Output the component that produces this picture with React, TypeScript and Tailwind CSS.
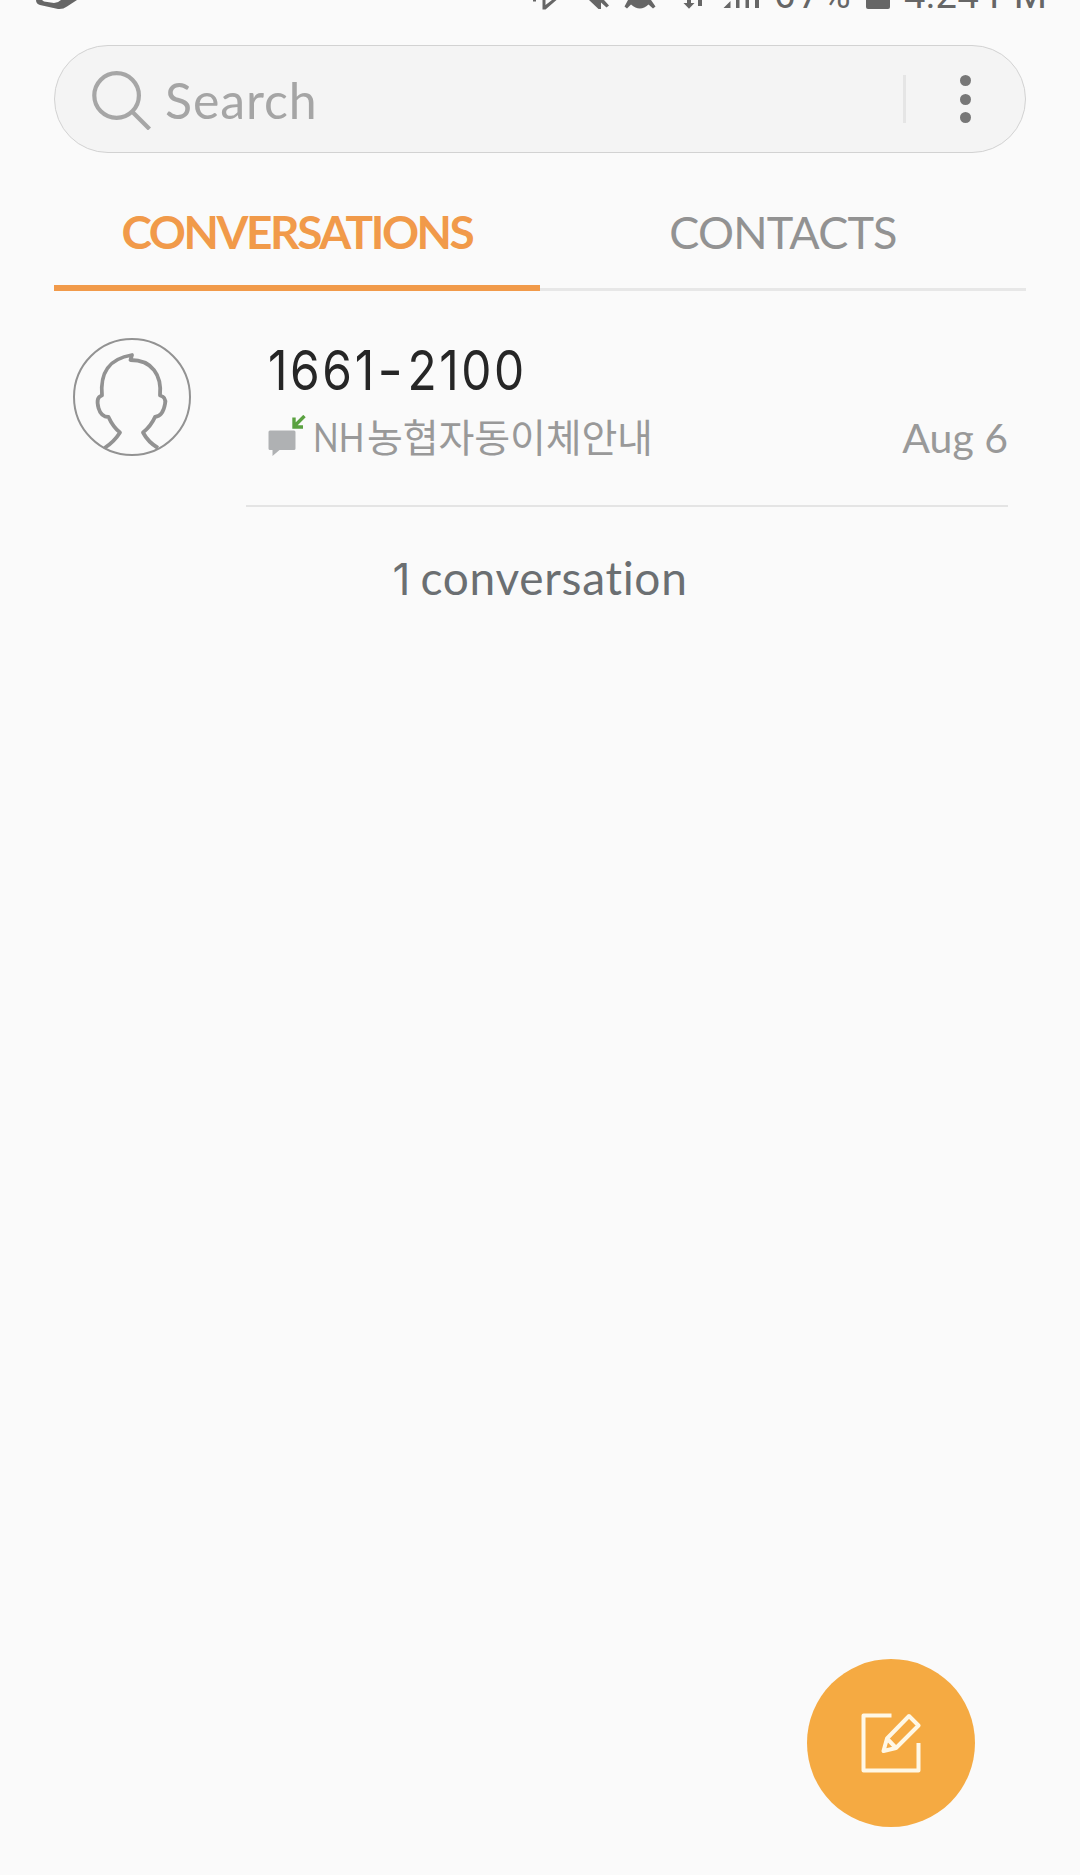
import type { ReactNode } from "react";
import { clsx } from "clsx";

const CONVERSATIONS = [
  { number: ["1661", "-", "2100"], preview: ["NH", "농협자동이체안내"], date: "Aug 6" },
];

function StatusBar() {
  return (
    <div className="relative h-[45px] shrink-0 overflow-hidden text-[#666]">
      <svg className="block h-[12px] w-full" viewBox="0 0 1080 12" fill="currentColor">
        <path d="M36 0 Q36 4 40 5 L58 9 Q63 9.500 67 6.500 L77 0 H61 Q58 3 54 3 L44 1.500 L42 0 Z" />
        <path d="M533 0 H536 V1.500 H533 Z M542.500 0 H545.500 V5 L552 0 H556.500 L545.500 9.500 H542.500 Z" />
        <path d="M589 0 H604 L609 5.500 L606.500 7.500 L601 2.500 V9 H598.500 Z" />
        <path d="M628 0 H651 L655.500 6.500 L653 8.500 L648.500 4.500 Q640 12.500 631 4.500 L627 8.500 L624.500 6.500 Z" />
        <path d="M687 0 H691 V3 H694.500 L689 8.700 L683.500 3 H687 Z M698 0 H702 V6 H698 Z" />
        <path d="M730.500 1 V8 H723.500 Z M736 0 H739.500 V8 H736 Z M745.500 0 H749 V8 H745.500 Z M755 0 H759 V8 H755 Z" />
        <path d="M866 0 H890 V7 Q890 9 888 9 H868 Q866 9 866 7 Z" />
      </svg>
      <span className="absolute left-[774px] top-[-27px] whitespace-pre font-[Roboto] text-[38px] leading-[44px] tracking-[3px]">67%</span>
      <span className="absolute left-[904px] top-[-27px] whitespace-pre font-[Roboto] text-[38px] leading-[44px] tracking-[0.500px]">4:24 PM</span>
    </div>
  );
}

function SearchBar() {
  return (
    <div className="mx-[54px] flex h-[108px] shrink-0 items-center rounded-full border border-[#d2d2d2] bg-[#f4f4f4]">
      <svg className="ml-[36px] size-[62px] shrink-0" viewBox="0 0 62 62" fill="none" stroke="#a6a6a6" strokeWidth="4.200">
        <circle cx="25.600" cy="27.500" r="22.300" />
        <path d="M41 43.500 L58.500 61" />
      </svg>
      <span className="ml-[12px] mt-[2px] flex-1 text-[50px] leading-[106px] tracking-[0.900px] text-[#a5a5a5]">Search</span>
      <div className="h-[48px] w-[3px] bg-[#e5e5e5]" />
      <div className="ml-[54px] mr-[54px] flex flex-col gap-[7.300px]">
        <i className="size-[11px] rounded-full bg-[#777]" />
        <i className="size-[11px] rounded-full bg-[#777]" />
        <i className="size-[11px] rounded-full bg-[#777]" />
      </div>
    </div>
  );
}

function Tab({ active, children }: { active?: boolean; children: ReactNode }) {
  return (
    <div
      className={clsx(
        "flex h-[138px] w-[486px] justify-center whitespace-nowrap pt-[49px] leading-[60px]",
        active
          ? "border-b-[6px] border-[#f19a4a] text-[46px] font-bold tracking-[-2.450px] text-[#f19a4a]"
          : "border-b-[3px] border-[#e7e7e7] text-[45px] tracking-[-0.800px] text-[#929292]"
      )}
    >
      {children}
    </div>
  );
}

function Avatar() {
  return (
    <svg className="size-[120px] shrink-0" viewBox="0 0 120 120" fill="none" stroke="#929292">
      <circle cx="60" cy="60" r="58" strokeWidth="2" />
      <path
        strokeWidth="3.800"
        strokeLinejoin="round"
        d="M32.500 111 Q42 105 48 95.500 Q41 90 36.500 80 Q29 80 26.500 71 Q23.500 60 30 58.500 C28 36 36 22 60 18 L58.500 23 C80 23 90 38 88 58.500 Q94.500 60 93 67 Q91 79 83 80 Q79 89 71 95.500 Q76 105 86 111"
      />
    </svg>
  );
}

function IncomingMessageIcon() {
  return (
    <svg className="-mt-[3px] h-[42px] w-[38px] shrink-0" viewBox="0 0 38 42">
      <path fill="#afb1b3" d="M2 15.500 H26 Q27.500 15.500 27.500 17 V33.500 Q27.500 35 26 35 H11.500 L4.500 41 V35 H2 Q.5 35 .5 33.500 V17 Q.5 15.500 2 15.500 Z" />
      <path fill="none" stroke="#5aa140" strokeWidth="3.400" d="M36.500 1 L26.500 11 M26 2.500 V12 H35" />
    </svg>
  );
}

function ConversationRow({ number, preview, date }: (typeof CONVERSATIONS)[number]) {
  return (
    <div className="flex h-[216px] shrink-0 pl-[72px] pr-[72px]">
      <div className="pt-[46px]">
        <Avatar />
      </div>
      <div className="ml-[54px] flex-1 border-b-[2px] border-[#e4e4e4] pl-[22px]">
        <div className="mt-[44px] flex h-[70px] origin-left scale-x-[0.870] whitespace-nowrap font-[Inter] text-[55px] leading-[70px] tracking-[3px] text-[#262626]">
          {number[0]}
          <span className="ml-[3px] mr-[4px] inline-block scale-x-[1.150]">{number[1]}</span>
          {number[2]}
        </div>
        <div className="mt-[2px] flex h-[60px] items-center whitespace-nowrap text-[40px] leading-[60px] text-[#999]">
          <IncomingMessageIcon />
          <span className="ml-[7px] w-[51px] origin-left scale-x-[0.840]">{preview[0]}</span>
          <span className="-mt-[4px] ml-[3px] font-['Noto_Sans_CJK_KR',sans-serif] text-[39px] tracking-[-0.150px]">{preview[1]}</span>
          <span className="ml-auto mt-[2px] whitespace-pre text-[41px]">{date}</span>
        </div>
      </div>
    </div>
  );
}

function ComposeButton() {
  return (
    <button className="mb-[48px] mr-[105px] mt-auto flex size-[168px] shrink-0 items-center justify-center self-end rounded-full bg-[#f5aa42]">
      <svg className="size-[60px]" viewBox="0 0 60 60" fill="none" stroke="#fff8e6" strokeWidth="4" strokeLinejoin="round">
        <path d="M30.500 2.500 H2.500 V57.500 H57.500 V30" />
        <path d="M26 25.500 L48 3 L57.500 12.500 L35 35 L22.500 38 Z M26 25.500 L35 35" />
      </svg>
    </button>
  );
}

export default function App() {
  return (
    <div className="flex h-[1875px] w-[1080px] flex-col overflow-hidden bg-[#fafafa] font-[Lato,sans-serif]">
      <StatusBar />
      <SearchBar />
      <div className="flex shrink-0 px-[54px]">
        <Tab active>CONVERSATIONS</Tab>
        <Tab>CONTACTS</Tab>
      </div>
      {CONVERSATIONS.map((conversation) => (
        <ConversationRow key={conversation.preview[1]} {...conversation} />
      ))}
      <p className="mt-[41px] whitespace-pre text-center text-[46px] leading-[60px] tracking-[0.700px] text-[#6b6f72]">
        <span className="mr-[-3px] font-[Inter] text-[44px]">{CONVERSATIONS.length}</span> conversation
      </p>
      <ComposeButton />
    </div>
  );
}
